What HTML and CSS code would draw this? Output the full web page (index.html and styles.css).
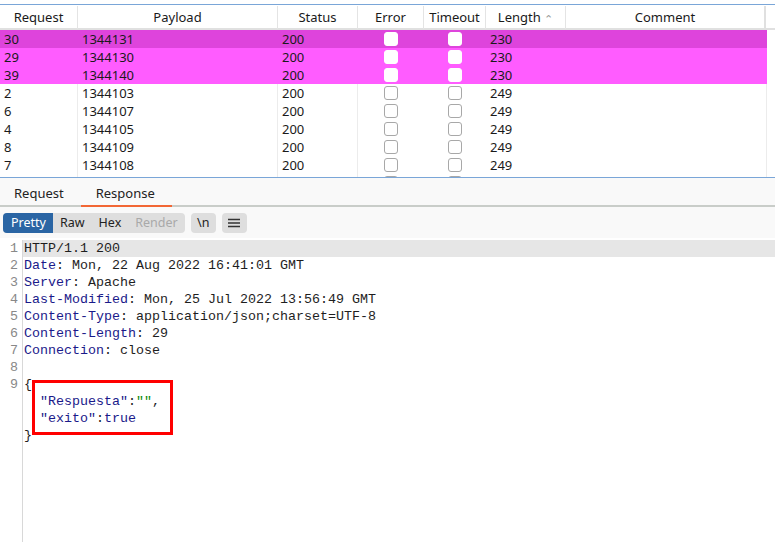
FILE: index.html
```html
<!DOCTYPE html>
<html>
<head>
<meta charset="utf-8">
<link rel="stylesheet" href="styles.css">
</head>
<body>
<div class="top-gap"></div>
<div class="results">
  <div class="row head">
    <div class="c c-hd">Request</div>
    <div class="c c-hd">Payload</div>
    <div class="c c-hd">Status</div>
    <div class="c c-hd">Error</div>
    <div class="c c-hd">Timeout</div>
    <div class="c c-hd">Length <span class="chev">&#x2303;</span></div>
    <div class="c c-hd last">Comment</div>
  </div>
  <div class="row sel"><div class="c">30</div><div class="c">1344131</div><div class="c">200</div><div class="c cb"><span class="box"></span></div><div class="c cb"><span class="box"></span></div><div class="c">230</div><div class="c"></div></div>
  <div class="row hl"><div class="c">29</div><div class="c">1344130</div><div class="c">200</div><div class="c cb"><span class="box"></span></div><div class="c cb"><span class="box"></span></div><div class="c">230</div><div class="c"></div></div>
  <div class="row hl"><div class="c">39</div><div class="c">1344140</div><div class="c">200</div><div class="c cb"><span class="box"></span></div><div class="c cb"><span class="box"></span></div><div class="c">230</div><div class="c"></div></div>
  <div class="row"><div class="c">2</div><div class="c">1344103</div><div class="c">200</div><div class="c cb"><span class="box"></span></div><div class="c cb"><span class="box"></span></div><div class="c">249</div><div class="c"></div></div>
  <div class="row"><div class="c">6</div><div class="c">1344107</div><div class="c">200</div><div class="c cb"><span class="box"></span></div><div class="c cb"><span class="box"></span></div><div class="c">249</div><div class="c"></div></div>
  <div class="row"><div class="c">4</div><div class="c">1344105</div><div class="c">200</div><div class="c cb"><span class="box"></span></div><div class="c cb"><span class="box"></span></div><div class="c">249</div><div class="c"></div></div>
  <div class="row"><div class="c">8</div><div class="c">1344109</div><div class="c">200</div><div class="c cb"><span class="box"></span></div><div class="c cb"><span class="box"></span></div><div class="c">249</div><div class="c"></div></div>
  <div class="row"><div class="c">7</div><div class="c">1344108</div><div class="c">200</div><div class="c cb"><span class="box"></span></div><div class="c cb"><span class="box"></span></div><div class="c">249</div><div class="c"></div></div>
  <div class="row peek"><div class="c"></div><div class="c"></div><div class="c"></div><div class="c cb"><span class="box"></span></div><div class="c cb"><span class="box"></span></div><div class="c"></div><div class="c"></div></div>
</div>
<div class="tabs">
  <div class="tab">Request</div>
  <div class="tab active">Response</div>
</div>
<div class="toolbar">
  <div class="seg">
    <span class="btn on">Pretty</span>
    <span class="btn">Raw</span>
    <span class="btn">Hex</span>
    <span class="btn dis">Render</span>
  </div>
  <span class="btn single">\n</span>
  <span class="btn single menu"><svg width="12" height="10" viewBox="0 0 12 10"><path d="M0 1.5h12M0 5h12M0 8.5h12" stroke="#333" stroke-width="1.4"/></svg></span>
</div>
<div class="editor">
  <div class="line cur"><span class="ln">1</span><span class="tx">HTTP/1.1 200</span></div>
  <div class="line"><span class="ln">2</span><span class="tx"><span class="k">Date</span>: Mon, 22 Aug 2022 16:41:01 GMT</span></div>
  <div class="line"><span class="ln">3</span><span class="tx"><span class="k">Server</span>: Apache</span></div>
  <div class="line"><span class="ln">4</span><span class="tx"><span class="k">Last-Modified</span>: Mon, 25 Jul 2022 13:56:49 GMT</span></div>
  <div class="line"><span class="ln">5</span><span class="tx"><span class="k">Content-Type</span>: application/json;charset=UTF-8</span></div>
  <div class="line"><span class="ln">6</span><span class="tx"><span class="k">Content-Length</span>: 29</span></div>
  <div class="line"><span class="ln">7</span><span class="tx"><span class="k">Connection</span>: close</span></div>
  <div class="line"><span class="ln">8</span><span class="tx"></span></div>
  <div class="line"><span class="ln">9</span><span class="tx">{</span></div>
  <div class="line"><span class="ln"></span><span class="tx">  <span class="k">"Respuesta"</span>:<span class="s">""</span>,</span></div>
  <div class="line"><span class="ln"></span><span class="tx">  <span class="k">"exito"</span>:<span class="k">true</span></span></div>
  <div class="line"><span class="ln"></span><span class="tx">}</span></div>
  <div class="line filler"><span class="ln"></span><span class="tx"></span></div>
  <div class="redbox"></div>
</div>
</body>
</html>
```

FILE: styles.css
```css
* { box-sizing: border-box; }
html, body { margin: 0; padding: 0; background: #fff; }
body {
  width: 775px;
  height: 542px;
  overflow: hidden;
  font-family: "Noto Sans", "Open Sans", sans-serif;
  font-size: 13px;
  color: #1a1a1a;
}
.top-gap { height: 5px; border-bottom: 1px solid #7aa6d8; }
.results {
  height: 173px;
  overflow: hidden;
  border-bottom: 1px solid #7aa6d8;
}
.row {
  display: grid;
  grid-template-columns: 78px 200px 80px 66px 62px 80px 201px;
  width: 767px;
  height: 18px;
}
.row .c {
  padding: 1px 0 0 4px;
  line-height: 17px;
  white-space: nowrap;
  border-right: 1px solid #ececec;
}
.row .c:nth-child(4), .row .c:nth-child(5), .row .c:nth-child(6) { border-right-color: transparent; }
.row.head {
  width: 775px;
  grid-template-columns: 78px 200px 80px 66px 62px 80px 200px 9px;
  height: 25px;
  border-bottom: 2px solid #e0e0e0;
}
.row.head .c {
  padding: 0;
  text-align: center;
  border-right: 1px solid #e4e4e4;
  margin: 1px 0 3px;
  line-height: 23px;
}
.row.head .c.last { border-right: 2px solid #e0e0e0; }
.chev { color: #999; font-size: 11px; position: relative; top: 1px; }
.row.sel { background: #de44dc; }
.row.hl { background: #ff5cff; }
.row.sel .c, .row.hl .c { border-right-color: transparent; }
.row .cb { display: flex; justify-content: center; align-items: center; padding: 0; }
.row.peek .cb { align-items: flex-start; padding-top: 2px; }
.box {
  display: block;
  width: 14px;
  height: 14px;
  border: 1px solid #a8a8a8;
  border-radius: 3px;
  background: #fff;
}
.sel .box, .hl .box { border-color: #fff; }

.tabs {
  display: flex;
  height: 29px;
  background: #f9f9f9;
  border-bottom: 2px solid #c9cdc9;
}
.tab {
  padding: 4px 15px 0 14px;
  line-height: 23px;
  height: 29px;
  color: #222;
}
.tab.active {
  margin-left: 2px;
  padding: 4px 17px 0 15px;
  border-bottom: 2px solid #f26735;
  height: 29px;
}
.toolbar {
  display: flex;
  align-items: center;
  gap: 6px;
  height: 31px;
  padding: 0 3px;
  background: #f9f9f9;
  font-size: 12.5px;
}
.seg {
  display: flex;
  background: #dedede;
  border-radius: 4px;
  height: 20px;
}
.btn {
  display: inline-block;
  height: 20px;
  line-height: 20px;
  padding: 0 7px;
  color: #222;
}
.btn.on {
  background: #2a65a4;
  color: #fff;
  border-radius: 4px 0 0 4px;
  padding: 0 7px 0 8px;
}
.btn.dis { color: #a9a9a9; padding-right: 7px; }
.btn.single {
  background: #dedede;
  border-radius: 4px;
  width: 25px;
  padding: 0;
  text-align: center;
}
.btn.menu { display: flex; align-items: center; justify-content: center; }

.editor {
  position: relative;
  margin-top: 2px;
  font-family: "Liberation Mono", monospace;
  font-size: 13.33px;
}
.line {
  display: flex;
  height: 17px;
  line-height: 17px;
}
.line .ln {
  width: 23px;
  flex: none;
  text-align: right;
  padding-right: 4px;
  color: #888;
  border-right: 1px solid #d8d8d8;
}
.line .tx {
  flex: 1;
  padding-left: 1px;
  white-space: pre;
  color: #1e1e1e;
}
.line.cur .tx { background: #e6e6e6; }
.line.filler { height: 120px; }
.k { color: #1a1a8a; }
.s { color: #0a8a0a; }
.redbox {
  position: absolute;
  left: 32px;
  top: 140px;
  width: 141px;
  height: 55px;
  border: 3px solid #ff0000;
}
```
